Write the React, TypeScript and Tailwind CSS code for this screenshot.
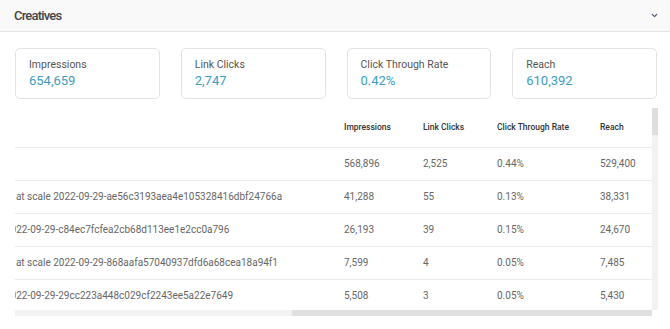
import { ChevronDown } from "lucide-react";
import { useEffect, useRef } from "react";

const stats = [
  { label: "Impressions", value: "654,659" },
  { label: "Link Clicks", value: "2,747" },
  { label: "Click Through Rate", value: "0.42%" },
  { label: "Reach", value: "610,392" },
];

const scaled = "Autumn Promo | Ad3 | Static Image | Broad Audience | Feed Placement | Headline Variant A | Creative tested at scale";
const tested = "Autumn Promo | Ad3 | Static Image | Broad Audience | Feed Placement | Headline Variant A | Creative test";

const rows = [
  { name: "", imp: "568,896", clicks: "2,525", ctr: "0.44%", reach: "529,400" },
  { name: scaled + " 2022-09-29-ae56c3193aea4e105328416dbf24766a", imp: "41,288", clicks: "55", ctr: "0.13%", reach: "38,331" },
  { name: tested + " 2022-09-29-c84ec7fcfea2cb68d113ee1e2cc0a796", imp: "26,193", clicks: "39", ctr: "0.15%", reach: "24,670" },
  { name: scaled + " 2022-09-29-868aafa57040937dfd6a68cea18a94f1", imp: "7,599", clicks: "4", ctr: "0.05%", reach: "7,485" },
  { name: tested + " 2022-09-29-29cc223a448c029cf2243ee5a22e7649", imp: "5,508", clicks: "3", ctr: "0.05%", reach: "5,430" },
];

// rows further down the list, below the fold
for (let i = 0; i < 38; i++) {
  const imp = Math.round(5200 / (1 + i * 0.35));
  rows.push({
    name: scaled + " 2022-09-28-" + (9000 + i * 37).toString(16) + "a1b2c3d4e5f60718293a4b5c6d",
    imp: imp.toLocaleString("en-US"),
    clicks: String(Math.max(0, 3 - Math.floor(i / 10))),
    ctr: "0.0" + Math.max(1, 5 - Math.floor(i / 8)) + "%",
    reach: Math.round(imp * 0.97).toLocaleString("en-US"),
  });
}

export default function App() {
  const scroller = useRef<HTMLDivElement>(null);

  useEffect(() => {
    if (scroller.current) scroller.current.scrollLeft = 99999;
  }, []);

  return (
    <main className="w-[670px] h-[329px] bg-white font-['Roboto',sans-serif] overflow-hidden">
      <div className="h-[32px] flex items-center justify-between pl-[14px] pr-[11px] bg-[#f9f9f9] border-b border-[#e4e4e4]">
        <p className="text-[13px] font-medium text-[#444] tracking-[-0.8px]">Creatives</p>
        <ChevronDown size={9} strokeWidth={3.5} className="text-[#4b5a78]" />
      </div>

      <div className="grid grid-cols-4 gap-[21px] pl-[15px] pr-[13px] pt-[16px]">
        {stats.map((s) => (
          <div
            key={s.label}
            className="h-[51px] rounded-[5px] border border-[#e3e3e3] pl-[13px] pt-[9px]"
          >
            <p className="text-[10.5px] leading-[14px] text-[#555]">{s.label}</p>
            <p className="text-[13px] leading-[18px] text-[#3c9cbf]">{s.value}</p>
          </div>
        ))}
      </div>

      <div className="ml-[15px] mt-[9px] w-[643px]">
        <div className="flex h-[202px]">
          <div ref={scroller} className="w-[637px] overflow-hidden">
            <table className="table-fixed w-[1127px] border-collapse text-left">
              <colgroup>
                <col className="w-[807px]" />
                <col className="w-[79px]" />
                <col className="w-[74px]" />
                <col className="w-[103px]" />
                <col className="w-[64px]" />
              </colgroup>
              <thead>
                <tr className="h-[39px] border-b border-[#ebebeb] text-[8.5px] text-[#333]">
                  <th className="px-[12px] font-medium">Name</th>
                  <th className="px-[12px] font-medium">Impressions</th>
                  <th className="px-[12px] font-medium">Link Clicks</th>
                  <th className="px-[12px] font-medium">Click Through Rate</th>
                  <th className="px-[12px] font-medium">Reach</th>
                </tr>
              </thead>
              <tbody>
                {rows.map((r, i) => (
                  <tr key={i} className="h-[33px] border-b border-[#ebebeb] text-[10px] text-[#666]">
                    <td className="px-[12px] whitespace-nowrap overflow-hidden">{r.name}</td>
                    <td className="px-[12px]">{r.imp}</td>
                    <td className="px-[12px]">{r.clicks}</td>
                    <td className="px-[12px]">{r.ctr}</td>
                    <td className="px-[12px]">{r.reach}</td>
                  </tr>
                ))}
              </tbody>
            </table>
          </div>
          {/* vertical scrollbar */}
          <div className="w-[6px] bg-[#f2f2f2]">
            <div className="h-[27px] bg-[#dedede]" />
          </div>
        </div>
        {/* horizontal scrollbar */}
        <div className="flex w-[637px] h-[6px] bg-[#f2f2f2]">
          <div className="ml-[277px] w-[360px] bg-[#e0e0e0]" />
        </div>
      </div>
    </main>
  );
}
